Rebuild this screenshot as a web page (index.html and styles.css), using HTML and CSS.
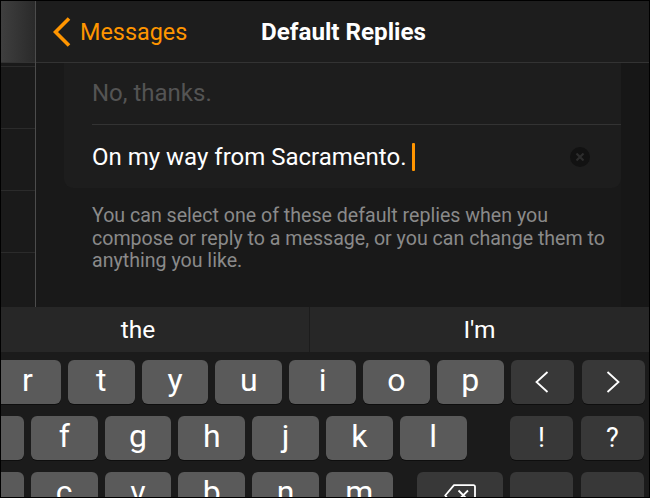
FILE: index.html
```html
<!DOCTYPE html>
<html>
<head>
<meta charset="utf-8">
<link rel="stylesheet" href="styles.css">
</head>
<body>
<div class="screen">
  <div class="top">
    <div class="sidebar">
      <div class="side-nav"></div>
      <div class="side-list">
        <div class="side-row first"></div>
        <div class="side-row"></div>
        <div class="side-row"></div>
        <div class="side-row"></div>
      </div>
    </div>
    <div class="main">
      <header class="navbar">
        <div class="back">
          <svg class="chev" width="18" height="30" viewBox="0 0 18 30"><polyline points="16,1.5 2.5,15 16,28.5" fill="none" stroke="#ff9500" stroke-width="3.6"/></svg>
          <span>Messages</span>
        </div>
        <h1 class="title">Default Replies</h1>
      </header>
      <div class="content">
        <div class="scroll">
          <div class="card">
            <div class="row placeholder"><span>No, thanks.</span></div>
            <div class="row editing">
              <span class="value">On my way from Sacramento.</span><span class="caret"></span>
              <svg class="clear" width="22" height="22" viewBox="0 0 22 22"><circle cx="11" cy="11" r="10" fill="#121212"/><path d="M7.5 7.5 L14.5 14.5 M14.5 7.5 L7.5 14.5" stroke="#2d2d2d" stroke-width="2.2"/></svg>
            </div>
          </div>
          <p class="footer">You can select one of these default replies when you compose or reply to a message, or you can change them to anything you like.</p>
        </div>
        <div class="gutter"></div>
      </div>
    </div>
  </div>
  <div class="keyboard">
    <div class="suggest">
      <div class="cell left">the</div>
      <div class="cell right">I'm</div>
    </div>
    <div class="keyrow r1">
      <div class="key">r</div><div class="key">t</div><div class="key">y</div><div class="key">u</div><div class="key">i</div><div class="key">o</div><div class="key">p</div>
      <div class="specials">
        <div class="key dark"><svg width="14" height="22" viewBox="0 0 14 22"><polyline points="12.5,1 1.5,11 12.5,21" fill="none" stroke="#fff" stroke-width="1.8"/></svg></div>
        <div class="key dark"><svg width="14" height="22" viewBox="0 0 14 22"><polyline points="1.5,1 12.5,11 1.5,21" fill="none" stroke="#fff" stroke-width="1.8"/></svg></div>
      </div>
    </div>
    <div class="keyrow r2">
      <div class="key">d</div><div class="key">f</div><div class="key">g</div><div class="key">h</div><div class="key">j</div><div class="key">k</div><div class="key">l</div>
      <div class="specials">
        <div class="key dark punct">!</div>
        <div class="key dark punct">?</div>
      </div>
    </div>
    <div class="keyrow r3">
      <div class="key">x</div><div class="key">c</div><div class="key">v</div><div class="key">b</div><div class="key">n</div><div class="key">m</div>
      <div class="key dark del"><svg width="32" height="23" viewBox="0 0 32 23"><path d="M10 1.2 H29.5 A1.5 1.5 0 0 1 31 2.7 V20.3 A1.5 1.5 0 0 1 29.5 21.8 H10 L1.2 11.5 Z" fill="none" stroke="#fff" stroke-width="1.8" stroke-linejoin="round"/><path d="M14.5 6.5 L24 16 M24 6.5 L14.5 16" stroke="#fff" stroke-width="1.8"/></svg></div>
      <div class="specials">
        <div class="key dark"></div>
        <div class="key dark"></div>
      </div>
    </div>
  </div>
</div>
</body>
</html>
```

FILE: styles.css
```css
* { box-sizing: border-box; }
html, body { margin: 0; padding: 0; background: #000; }
body { width: 650px; height: 498px; overflow: hidden; }

.screen {
  width: 650px;
  height: 498px;
  border: 1px solid #000;
  display: flex;
  flex-direction: column;
  font-family: "Roboto", "Liberation Sans", sans-serif;
  background: #1a1a1a;
  overflow: hidden;
}

.top {
  height: 306px;
  display: flex;
  flex: none;
}

.sidebar {
  width: 35px;
  border-right: 1px solid #4c4c4c;
  display: flex;
  flex-direction: column;
  background: #1a1a1a;
}
.side-nav {
  height: 62px;
  border-bottom: 1px solid #333;
  background: linear-gradient(90deg, #3f3f3f 0%, #2a2a2a 100%);
}
.side-list { flex: 1; }
.side-row {
  height: 62px;
  border-bottom: 1px solid #2b2b2b;
}
.side-row.first { height: 4px; }

.main {
  flex: 1;
  display: flex;
  flex-direction: column;
}

.navbar {
  height: 62px;
  border-bottom: 1px solid #333;
  background: #1d1d1d;
  position: relative;
  display: flex;
  align-items: center;
  justify-content: center;
}
.back {
  position: absolute;
  left: 17px;
  top: 0;
  height: 61px;
  display: flex;
  align-items: center;
  gap: 9px;
  color: #ff9500;
  font-size: 23.4px;
}
.chev { display: block; margin-top: 1px; }
.title {
  margin: 0 0 0 2px;
  color: #fff;
  font-size: 24.2px;
  font-weight: 700;
}

.content {
  flex: 1;
  display: flex;
  background: #191919;
}
.scroll {
  flex: 1;
  padding: 0 0 0 28px;
}
.gutter {
  width: 28px;
  background: #171717;
}

.card {
  background: #1d1d1d;
  border-radius: 0 0 9px 9px;
  padding-left: 28px;
}
.row {
  display: flex;
  align-items: center;
  font-size: 24px;
}
.placeholder {
  height: 62px;
  border-bottom: 1px solid #333;
  color: #545454;
  padding-bottom: 1px;
}
.editing {
  height: 63px;
  color: #fff;
  padding-right: 30px;
}
.caret {
  width: 2.5px;
  height: 28px;
  background: #ff9500;
  margin-left: 6px;
  border-radius: 1px;
}
.clear { margin-left: auto; display: block; }

.footer {
  margin: 17px 0 0;
  padding-left: 28px;
  padding-right: 8px;
  color: #8a8a8a;
  font-size: 19.6px;
  line-height: 22.5px;
}

.keyboard {
  flex: 1;
  background: #1b1b1b;
  overflow: hidden;
}
.suggest {
  height: 45px;
  display: flex;
  background: #272727;
  color: #fff;
  font-size: 24.5px;
}
.cell {
  display: flex;
  align-items: center;
  justify-content: center;
}
.cell.left {
  margin-left: -34px;
  width: 343px;
  border-right: 1px solid #1c1c1c;
}
.cell.right { flex: 1; }

.keyrow {
  display: flex;
  gap: 7px;
  height: 44px;
  padding-right: 5px;
}
.r1 { margin: 8px 0 0 -7px; }
.r2 { margin: 12px 0 0 -44px; }
.r3 { margin: 12px 0 0 -44px; }

.key {
  width: 66.8px;
  height: 44px;
  flex: none;
  border-radius: 6px;
  background: #5a5a5a;
  box-shadow: 0 1px 0 #0e0e0e;
  color: #fff;
  font-size: 32px;
  display: flex;
  align-items: center;
  justify-content: center;
  padding-bottom: 4px;
}
.key.dark {
  background: #383838;
  width: 63px;
  padding-bottom: 0;
}
.key.punct { font-size: 27px; }
.key.del {
  width: 86px;
  margin-left: 17px;
  padding-top: 2px;
}
.specials {
  margin-left: auto;
  display: flex;
  gap: 8px;
}
```
